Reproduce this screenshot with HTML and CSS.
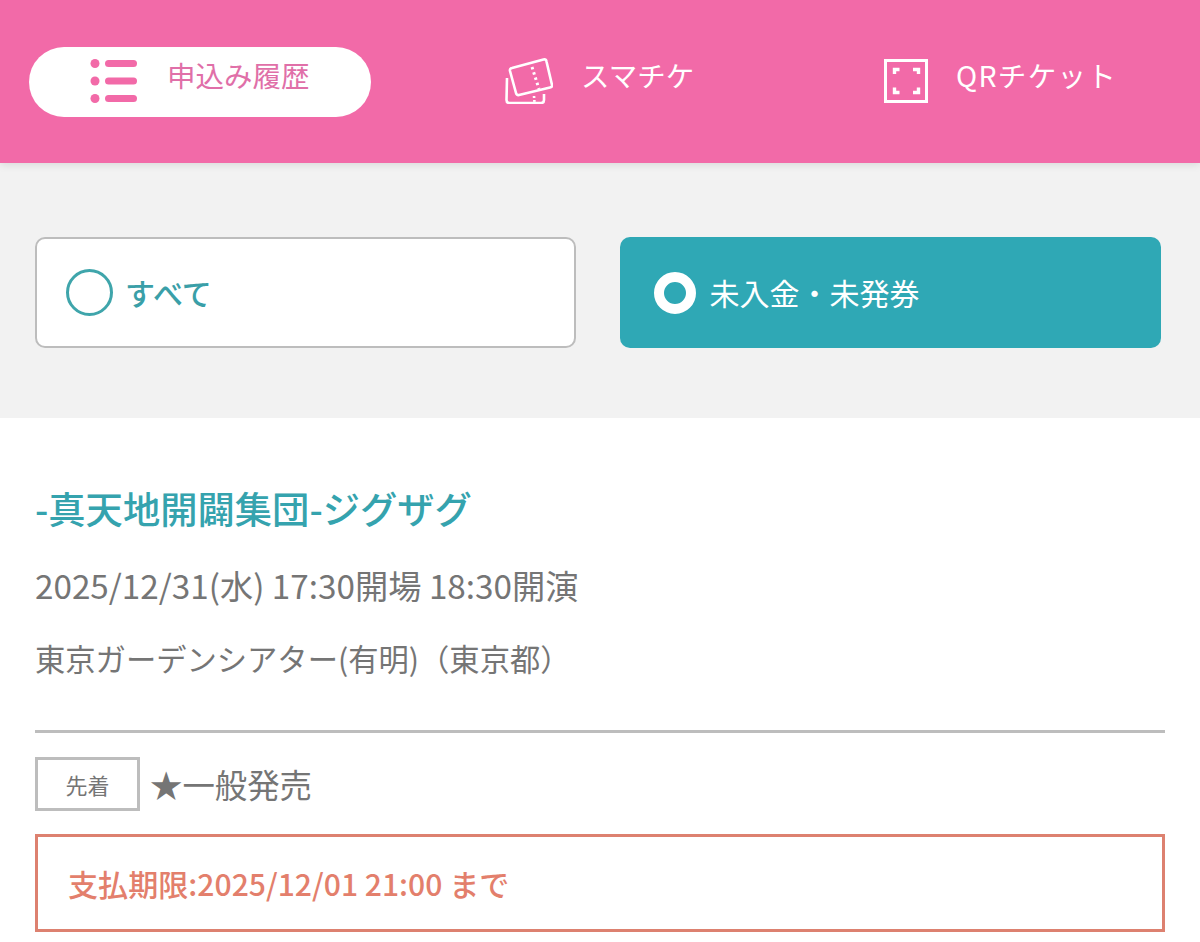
FILE: index.html
```html
<!DOCTYPE html>
<html lang="ja">
<head>
<meta charset="utf-8">
<title>申込み履歴</title>
<link rel="stylesheet" href="styles.css">
</head>
<body>
<header class="tabs">
  <a class="tab tab-history">
    <svg class="ico-list" width="48" height="44" viewBox="0 0 48 44"><g fill="#f26aa8"><circle cx="5" cy="4.500" r="4.500"/><circle cx="5" cy="22" r="4.500"/><circle cx="5" cy="39.500" r="4.500"/><rect x="15" y="1" width="32" height="7" rx="3.500"/><rect x="15" y="18.500" width="32" height="7" rx="3.500"/><rect x="15" y="36" width="32" height="7" rx="3.500"/></g></svg>
    <span class="tab-label label-history">申込み履歴</span>
  </a>
  <a class="tab tab-sumachike">
    <svg class="ico-ticket" width="48" height="46" viewBox="0 0 48 46" fill="none" stroke="#fff" stroke-width="2.600" stroke-linejoin="round"><path d="M2 20 L1.500 42 Q1.500 45 4.500 45 L36 45 Q39 45 39 42 L39 36"/><path d="M7 10 L38.500 1.500 Q41 1 41.500 3.500 L47 27 Q47.500 29 45 29.500 L14 37 Q11.500 37.500 11 35 L5 13 Q4.500 10.500 7 10 Z" fill="#f26aa8"/><path d="M27 9 L34 31" stroke-width="3" stroke-dasharray="2.500 3"/><path d="M29 38 L29.500 44" stroke-dasharray="2 2"/></svg>
    <span class="tab-label">スマチケ</span>
  </a>
  <a class="tab tab-qr">
    <svg class="ico-qr" width="44" height="44" viewBox="0 0 44 44" fill="none" stroke="#fff"><rect x="1.500" y="1.500" width="41" height="41" stroke-width="3"/><path d="M10.500 15 V10.500 H15.500 M29 10.500 H34.500 V15 M34.500 28.500 V33.500 H29 M15.500 33.500 H10.500 V28.500" stroke-width="3.400"/></svg>
    <span class="tab-label label-qr">QRチケット</span>
  </a>
</header>

<section class="filter">
  <div class="choice choice-off"><span class="radio radio-off"></span><span class="choice-text text-all">すべて</span></div>
  <div class="choice choice-on"><span class="radio radio-on"></span><span class="choice-text text-unpaid">未入金・未発券</span></div>
</section>

<main class="entry">
  <h1 class="title">-真天地開闢集団-ジグザグ</h1>
  <p class="date">2025/12/31(水) 17:30開場 18:30開演</p>
  <p class="venue">東京ガーデンシアター(有明)（東京都）</p>
  <hr class="rule">
  <div class="sale"><span class="badge">先着</span><span class="sale-name">★一般発売</span></div>
  <div class="deadline">支払期限:2025/12/01 21:00 まで</div>
</main>
</body>
</html>
```
FILE: styles.css
```css
* { box-sizing: border-box; }
html, body { margin: 0; padding: 0; }
body {
  width: 1200px;
  height: 942px;
  overflow: hidden;
  background: #fff;
  font-family: "Noto Sans CJK JP", "Noto Sans", sans-serif;
  color: #757575;
}
.tabs {
  height: 163px;
  background: #f26aa8;
  box-shadow: 0 2px 8px rgba(0, 0, 0, .1);
  position: relative;
  display: flex;
  align-items: flex-start;
  padding: 47px 0 0 29px;
}
.tab {
  display: flex;
  align-items: center;
  height: 70px;
  color: #fff;
  font-size: 28.500px;
  font-weight: 400;
  white-space: nowrap;
}
.tab-label { margin-top: -16px; }
.tab-history {
  width: 342px;
  background: #fff;
  border-radius: 35px;
  padding-left: 61px;
  color: #e06fa8;
}
.ico-list { margin-top: -2px; }
.label-history { margin-left: 29px; }
.tab-sumachike { margin-left: 134px; width: 379px; }
.tab-sumachike .tab-label { margin-left: 28px; }
.ico-ticket { margin-top: -3px; }
.ico-qr { margin-top: -2px; }
.label-qr { margin-left: 28px; letter-spacing: 1.300px; }
.filter {
  height: 255px;
  background: #f2f2f2;
  display: flex;
  gap: 44px;
  padding: 74px 39px 0 35px;
}
.choice {
  flex: 1;
  height: 111px;
  border-radius: 10px;
  display: flex;
  align-items: center;
}
.choice-off {
  background: #fff;
  border: 2px solid #bdbdbd;
  padding-left: 29px;
}
.choice-on {
  background: #2fa8b5;
  padding-left: 34px;
}
.radio { display: block; border-radius: 50%; flex: none; }
.radio-off { width: 47px; height: 47px; border: 3px solid #3fa5ab; }
.radio-on { width: 42px; height: 42px; border: 10px solid #fff; background: #2fa8b5; }
.choice-text { font-weight: 500; margin-top: -2px; }
.text-all { font-size: 30px; color: #3a9fa8; margin-left: 12px; }
.text-unpaid { font-size: 30px; color: #fff; margin-left: 14px; font-weight: 400; }
.entry { padding: 62px 35px 0; }
.title {
  margin: 0;
  font-size: 37.300px;
  line-height: 56px;
  font-weight: 500;
  color: #35a3ae;
  white-space: nowrap;
}
.date {
  margin: 28px 0 0;
  font-size: 33.250px;
  line-height: 42px;
  white-space: nowrap;
}
.venue {
  margin: 31px 0 0;
  font-size: 30.300px;
  line-height: 42px;
  white-space: nowrap;
}
.rule {
  margin: 51px 0 0;
  height: 3px;
  border: 0;
  background: #bdbdbd;
  width: 1130px;
}
.sale { display: flex; align-items: center; margin-top: 24px; }
.badge {
  width: 105px;
  height: 54px;
  border: 3px solid #bdbdbd;
  display: flex;
  align-items: center;
  justify-content: center;
  font-size: 22px;
}
.sale-name { font-size: 32.400px; margin-left: 10px; line-height: 54px; }
.deadline {
  margin-top: 23px;
  width: 1130px;
  height: 98px;
  border: 3px solid #dd8170;
  padding-left: 30px;
  display: flex;
  align-items: center;
  color: #e37f6c;
  font-size: 30.100px;
  font-weight: 500;
  white-space: nowrap;
}
```
